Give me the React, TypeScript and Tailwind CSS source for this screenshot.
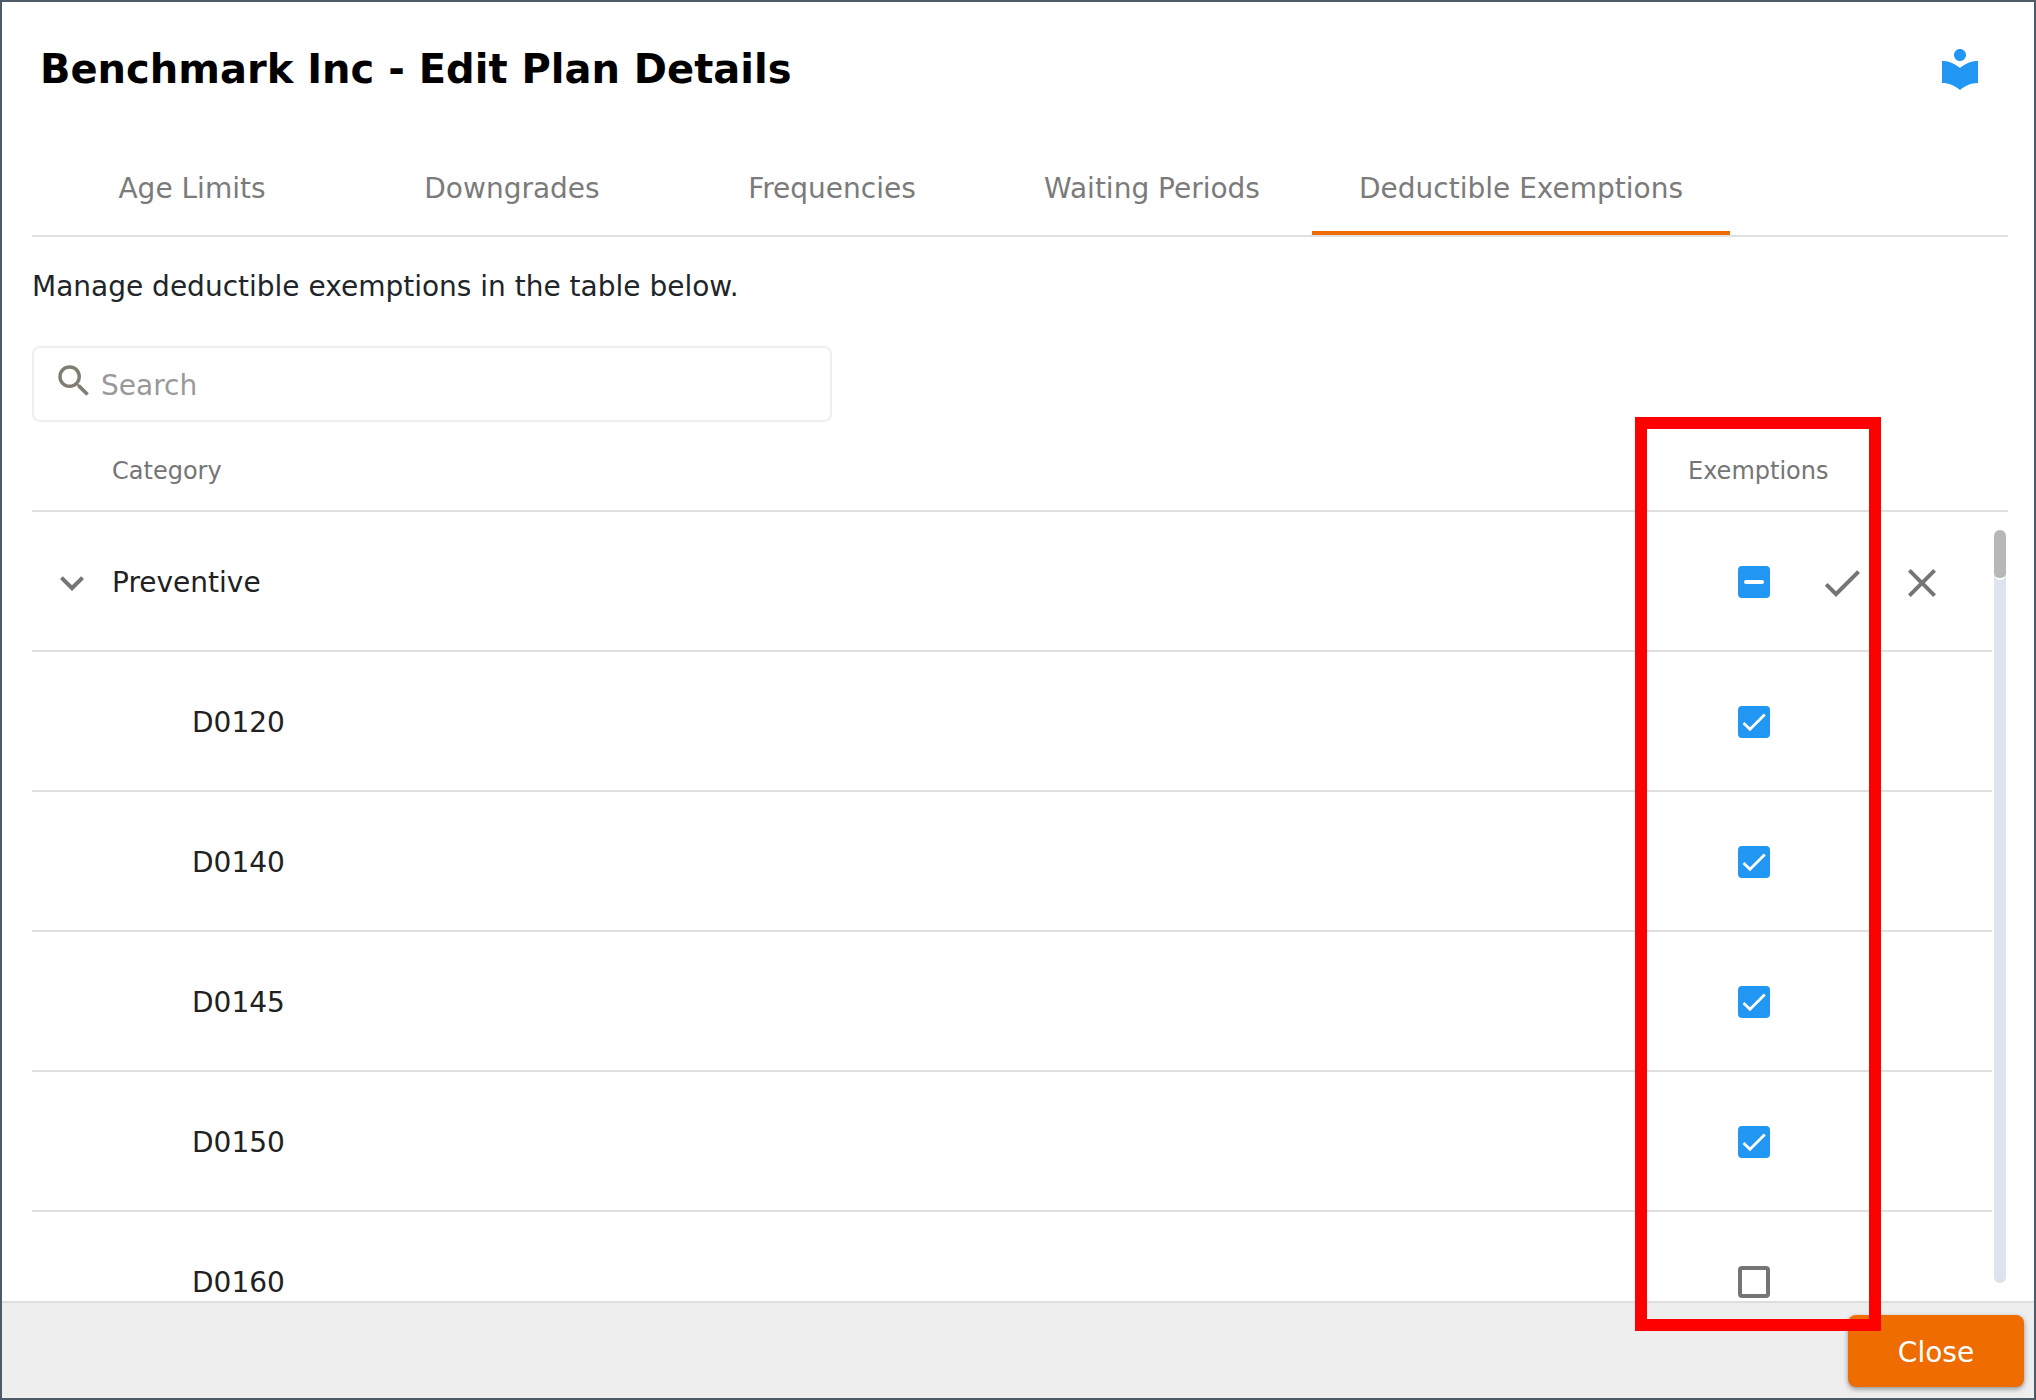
import { useState } from 'react';
import { MdCheck, MdClose, MdExpandMore, MdLocalLibrary, MdSearch } from 'react-icons/md';

const tabs = ['Age Limits', 'Downgrades', 'Frequencies', 'Waiting Periods', 'Deductible Exemptions'];

const initialCodes = [
    { code: 'D0120', exempt: true },
    { code: 'D0140', exempt: true },
    { code: 'D0145', exempt: true },
    { code: 'D0150', exempt: true },
    { code: 'D0160', exempt: false },
];

type CheckboxProps = {
    label: string;
    checked: boolean;
    mixed?: boolean;
    onChange: (checked: boolean) => void;
};

function Checkbox({ label, checked, mixed = false, onChange }: CheckboxProps) {
    const filled = checked || mixed;

    return (
        <div className="flex justify-end pr-8 pb-0.5">
            <span className="grid h-8 w-8">
                <input
                    type="checkbox"
                    aria-label={label}
                    aria-checked={mixed ? 'mixed' : checked}
                    checked={checked}
                    onChange={(e) => onChange(e.target.checked)}
                    className={`col-start-1 row-start-1 h-8 w-8 cursor-pointer appearance-none rounded ${filled ? 'bg-[#2196f3]' : 'border-4 border-[#757575]'}`}
                />
                {filled && (
                    <svg viewBox="0 0 32 32" fill="none" stroke="white" className="pointer-events-none col-start-1 row-start-1 h-8 w-8">
                        {mixed ? (
                            <path d="M8 16H24" strokeWidth="4" strokeLinecap="round" />
                        ) : (
                            <path d="M5.5 17L12 23.3L26.8 8.5" strokeWidth="2.7" />
                        )}
                    </svg>
                )}
            </span>
        </div>
    );
}

export default function App() {
    const [activeTab, setActiveTab] = useState('Deductible Exemptions');
    const [isOpen, setIsOpen] = useState(true);
    const [codes, setCodes] = useState(initialCodes);

    const allExempt = codes.every((c) => c.exempt);
    const someExempt = codes.some((c) => c.exempt);

    const toggleCode = (code: string, exempt: boolean) =>
        setCodes(codes.map((c) => (c.code === code ? { ...c, exempt } : c)));

    const toggleAll = (exempt: boolean) => setCodes(codes.map((c) => ({ ...c, exempt })));

    return (
        <div className="relative flex h-screen flex-col border-2 border-[#4e5b67] bg-white font-['DejaVu_Sans',Verdana,sans-serif] text-[28px] leading-10 text-[#212121]">
            <header className="flex items-center justify-between pt-[43px] pr-[50px] pl-[38px]">
                <h1 className="text-[40px] leading-12 font-bold text-black">Benchmark Inc - Edit Plan Details</h1>
                <button aria-label="Guide" className="text-[#2196f3]">
                    <MdLocalLibrary className="h-12 w-12" />
                </button>
            </header>

            <main className="flex min-h-0 flex-1 flex-col pr-[26px] pl-[30px]">
                <nav className="mt-[46px] flex border-b-2 border-[#e0e0e0]">
                    {tabs.map((tab) => (
                        <button
                            key={tab}
                            onClick={() => setActiveTab(tab)}
                            className={`h-24 min-w-80 border-b-4 px-[47px] pt-2 text-[#7b7b7b] ${activeTab === tab ? 'border-[#ef6c00]' : 'border-transparent'}`}
                        >
                            {tab}
                        </button>
                    ))}
                </nav>

                <p className="mt-[30px] text-[#212529]">Manage deductible exemptions in the table below.</p>

                <label className="mt-[39px] flex h-19 w-200 items-center rounded-lg border-2 border-[#eeeeee] pl-[19px]">
                    <MdSearch className="mb-1.5 h-[42px] w-[42px] shrink-0 text-[#807d72]" />
                    <input
                        type="search"
                        aria-label="Search"
                        placeholder="Search"
                        className="ml-1.5 min-w-0 flex-1 pt-1 outline-none placeholder:text-[#999999]"
                    />
                </label>

                <div className="relative min-h-0 flex-1 overflow-hidden">
                    <table className="w-full table-fixed border-separate border-spacing-0 text-left">
                        <colgroup>
                            <col className="w-20" />
                            <col />
                            <col className="w-[114px]" />
                            <col className="w-20" />
                            <col className="w-[110px]" />
                            <col className="w-4" />
                        </colgroup>
                        <thead>
                            <tr className="h-[90px] text-2xl text-[#757575] *:border-b-2 *:border-[#e0e0e0] *:px-0 *:pt-2.5 *:pb-0 *:font-normal">
                                <td />
                                <th scope="col">Category</th>
                                <th scope="col" colSpan={2}>Exemptions</th>
                                <td colSpan={2} />
                            </tr>
                        </thead>
                        <tbody>
                            <tr className="h-35 *:border-[#e0e0e0] *:px-0 *:pt-1 *:pb-0 *:not-last:border-b-2">
                                <td>
                                    <button
                                        aria-label="Toggle Preventive"
                                        aria-expanded={isOpen}
                                        onClick={() => setIsOpen(!isOpen)}
                                        className="ml-4 block text-[#757575]"
                                    >
                                        <MdExpandMore className="h-12 w-12" />
                                    </button>
                                </td>
                                <td>Preventive</td>
                                <td>
                                    <Checkbox
                                        label="Preventive exemptions"
                                        checked={allExempt}
                                        mixed={someExempt && !allExempt}
                                        onChange={toggleAll}
                                    />
                                </td>
                                <td>
                                    <button aria-label="Save" className="mx-auto block text-[#757575]">
                                        <MdCheck className="h-12 w-12" />
                                    </button>
                                </td>
                                <td>
                                    <button aria-label="Cancel" className="ml-4 block text-[#757575]">
                                        <MdClose className="h-12 w-12" />
                                    </button>
                                </td>
                                <td />
                            </tr>
                            {isOpen && codes.map(({ code, exempt }) => (
                                <tr key={code} className="h-35 *:border-[#e0e0e0] *:px-0 *:pt-1 *:pb-0 *:not-last:border-b-2">
                                    <td />
                                    <td className="pl-20!">{code}</td>
                                    <td>
                                        <Checkbox
                                            label={`${code} exemption`}
                                            checked={exempt}
                                            onChange={(value) => toggleCode(code, value)}
                                        />
                                    </td>
                                    <td colSpan={2} />
                                    <td />
                                </tr>
                            ))}
                        </tbody>
                    </table>

                    {/* Scrollbar */}
                    <div className="absolute top-[108px] right-0.5 bottom-[18px] w-3 rounded-full bg-[#dfe3ee]">
                        <div className="h-[50px] rounded-full border-b-2 border-white bg-[#b7b7b7]" />
                    </div>
                </div>
            </main>

            <footer className="flex justify-end border-t-2 border-[#dddddd] bg-[#eeeeee] px-2.5 pt-3 pb-[11px]">
                <button className="h-18 w-44 rounded-lg bg-[#ef6c00] pt-1 text-white shadow-[0_2px_5px_rgba(0,0,0,0.4)]">
                    Close
                </button>
            </footer>

            {/* Highlight over the exemptions column */}
            <div className="pointer-events-none absolute top-[415px] right-[153px] bottom-[67px] w-[246px] border-12 border-[#ff0000]" />
        </div>
    );
}
